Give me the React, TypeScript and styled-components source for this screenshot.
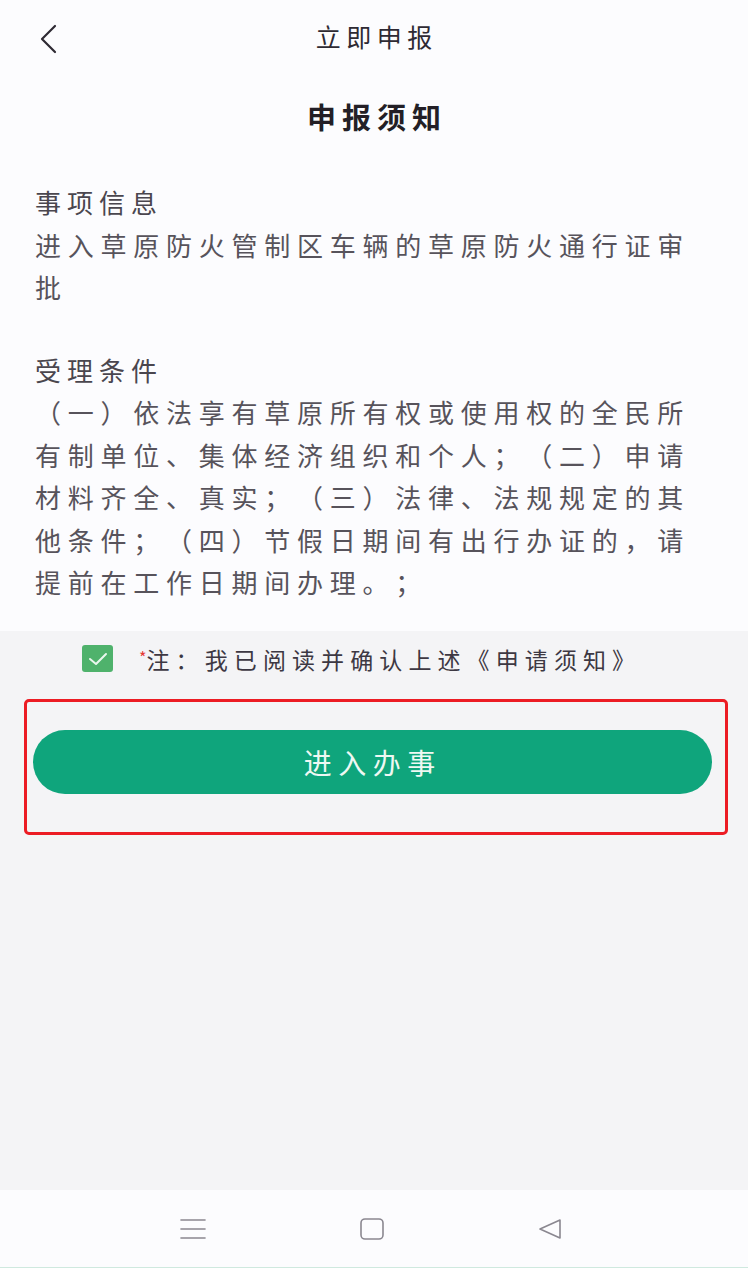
import React from "react";
import styled, { createGlobalStyle } from "styled-components";

const GlobalStyle = createGlobalStyle`
  html, body {
    margin: 0;
    padding: 0;
    background: #fcfcfe;
  }
  body {
    font-family: "Noto Sans CJK SC", "Noto Sans", sans-serif;
    text-spacing-trim: space-all;
    font-feature-settings: "halt" 0, "chws" 0;
  }
`;

const Page = styled.div`
  display: flex;
  flex-direction: column;
  width: 748px;
  min-height: 1268px;
  background: #f4f4f6;
`;

const TopSection = styled.div`
  background: #fcfcfe;
  padding-bottom: 27px;
`;

const NavBar = styled.div`
  position: relative;
  height: 76px;
  display: flex;
  align-items: center;
  justify-content: center;
`;

const BackButton = styled.button`
  position: absolute;
  left: 32px;
  top: 22px;
  width: 32px;
  height: 34px;
  padding: 0;
  border: none;
  background: transparent;
  display: flex;
  align-items: center;
  justify-content: center;
`;

const NavTitle = styled.div`
  font-size: 25px;
  color: #2e2a33;
  letter-spacing: 5.5px;
  margin-right: -5.5px;
  margin-top: -4px;
`;

const NoticeTitle = styled.h1`
  margin: 20px 0 0;
  text-align: center;
  font-size: 29px;
  line-height: 40px;
  font-weight: 700;
  color: #231f26;
  letter-spacing: 6px;
  padding-left: 6px;
`;

const Section = styled.section<{ $gap: number }>`
  margin-top: ${(p) => p.$gap}px;
  padding: 0 35px;
  font-size: 26px;
  line-height: 42.5px;
  letter-spacing: 6.75px;
  color: #57535b;
`;

const SectionHeading = styled.div`
  letter-spacing: 6px;
  color: #4a464e;
`;

const SectionBody = styled.div`
  word-break: break-all;
`;

const GrayArea = styled.div`
  flex: 1;
  padding: 8px 0 0;
`;

const ConfirmRow = styled.label`
  height: 40px;
  display: flex;
  align-items: center;
  padding-left: 82px;
`;

const CheckBox = styled.span`
  width: 31px;
  height: 27px;
  border-radius: 3px;
  background: #4fb26c;
  display: flex;
  align-items: center;
  justify-content: center;
  margin-right: 26px;
`;

const Star = styled.span`
  color: #e53935;
  font-size: 16px;
  align-self: flex-start;
  margin-top: 6px;
`;

const ConfirmText = styled.span`
  font-size: 23px;
  letter-spacing: 6.1px;
  color: #3d3843;
`;

const Highlight = styled.div`
  margin: 20px 20px 0 24px;
  border: 3px solid #ec1c24;
  border-radius: 5px;
  padding: 28px 13px 38px 6px;
`;

const EnterButton = styled.button`
  width: 100%;
  height: 64px;
  border: none;
  border-radius: 32px;
  background: #0fa57c;
  color: #eef8f3;
  font-family: "Noto Sans CJK SC", sans-serif;
  font-size: 28px;
  letter-spacing: 6.5px;
  padding-left: 6.5px;
  cursor: pointer;
`;

const SystemBar = styled.div`
  height: 78px;
  background: #fcfcfe;
  display: grid;
  grid-template-columns: 195px 178px 178px;
  justify-content: center;
  align-items: center;
  padding-right: 176px;
  box-sizing: border-box;
  border-bottom: 1px solid #cfe9df;
`;

const SysIcon = styled.div`
  display: flex;
  justify-content: flex-end;
`;

const App: React.FC = () => {
  return (
    <Page>
      <GlobalStyle />
      <TopSection>
        <NavBar>
          <BackButton aria-label="返回">
            <svg width="22" height="32" viewBox="0 0 22 32">
              <path
                d="M18 3 L5 16 L18 29"
                fill="none"
                stroke="#2e2a33"
                strokeWidth="2.2"
                strokeLinecap="round"
                strokeLinejoin="round"
              />
            </svg>
          </BackButton>
          <NavTitle>立即申报</NavTitle>
        </NavBar>
        <NoticeTitle>申报须知</NoticeTitle>
        <Section $gap={45}>
          <SectionHeading>事项信息</SectionHeading>
          <SectionBody>进入草原防火管制区车辆的草原防火通行证审批</SectionBody>
        </Section>
        <Section $gap={40}>
          <SectionHeading>受理条件</SectionHeading>
          <SectionBody>
            （一）依法享有草原所有权或使用权的全民所有制单位、集体经济组织和个人；（二）申请材料齐全、真实；（三）法律、法规规定的其他条件；（四）节假日期间有出行办证的，请提前在工作日期间办理。；
          </SectionBody>
        </Section>
      </TopSection>
      <GrayArea>
        <ConfirmRow>
          <CheckBox>
            <svg width="20" height="14" viewBox="0 0 20 14">
              <path
                d="M2 7 L8 12 L18 2"
                fill="none"
                stroke="#eaf7ee"
                strokeWidth="2"
                strokeLinecap="round"
                strokeLinejoin="round"
              />
            </svg>
          </CheckBox>
          <Star>*</Star>
          <ConfirmText>注：我已阅读并确认上述《申请须知》</ConfirmText>
        </ConfirmRow>
        <Highlight>
          <EnterButton>进入办事</EnterButton>
        </Highlight>
      </GrayArea>
      <SystemBar>
        <SysIcon>
          <svg width="26" height="22" viewBox="0 0 26 22">
            <g stroke="#8a8790" strokeWidth="1.6" strokeLinecap="round">
              <line x1="1" y1="2" x2="25" y2="2" />
              <line x1="1" y1="11" x2="25" y2="11" />
              <line x1="1" y1="20" x2="25" y2="20" />
            </g>
          </svg>
        </SysIcon>
        <SysIcon>
          <svg width="24" height="22" viewBox="0 0 24 22">
            <rect
              x="1"
              y="1"
              width="22"
              height="20"
              rx="4"
              fill="none"
              stroke="#8a8790"
              strokeWidth="1.6"
            />
          </svg>
        </SysIcon>
        <SysIcon>
          <svg width="24" height="22" viewBox="0 0 24 22">
            <path
              d="M22 2 L22 20 L2 11 Z"
              fill="none"
              stroke="#8a8790"
              strokeWidth="1.6"
              strokeLinejoin="round"
            />
          </svg>
        </SysIcon>
      </SystemBar>
    </Page>
  );
};

export default App;
